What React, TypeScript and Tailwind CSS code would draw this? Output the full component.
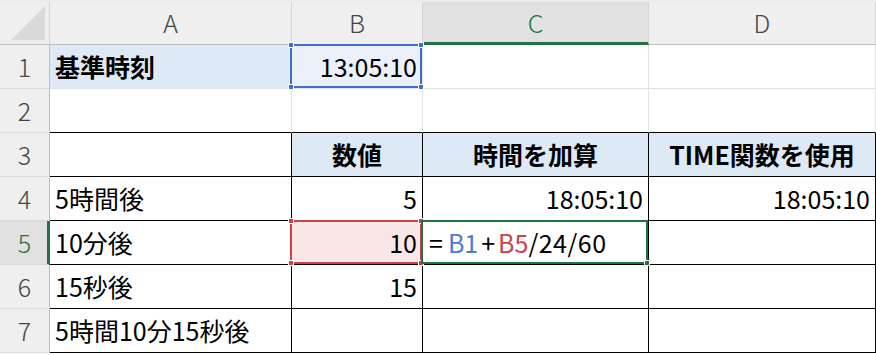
import React from "react"

const font = { fontFamily: '"Noto Sans CJK JP", "Noto Sans", sans-serif' }

const GRID = "#e1e1e1"
const BLACK = "#000000"

type CellDef = {
  text?: React.ReactNode
  align?: "left" | "right" | "center"
  bold?: boolean
  bg?: string
  overlay?: React.ReactNode
}

// selection outline with square handles at the corners
function Outline({ color, corners }: { color: string; corners: ("tl" | "tr" | "bl" | "br")[] }) {
  const pos: Record<string, string> = {
    tl: "-left-[4px] -top-[4px]",
    tr: "-right-[4px] -top-[4px]",
    bl: "-left-[4px] -bottom-[4px]",
    br: "-right-[4px] -bottom-[4px]",
  }
  return (
    <div
      className="pointer-events-none absolute -left-[2px] -top-[1px] right-0 bottom-0 z-10 border-2"
      style={{ borderColor: color }}
    >
      {corners.map((c) => (
        <div
          key={c}
          className={`absolute h-[6px] w-[6px] border border-white ${pos[c]}`}
          style={{ backgroundColor: color }}
        />
      ))}
    </div>
  )
}

const formula = (
  <span>
    <span className="ml-[1px] mr-[5px]">=</span>
    <span className="text-[#4a7bd6]">B1</span>
    <span className="mx-[3px]">+</span>
    <span className="text-[#c9444a]">B5</span>
    <span className="tracking-[0.5px]">/24/60</span>
  </span>
)

const rows: CellDef[][] = [
  [
    { text: "基準時刻", bold: true, bg: "#dde9f5" },
    {
      text: "13:05:10",
      align: "right",
      bg: "#ebf0f9",
      overlay: <Outline color="#3f6fcb" corners={["tl", "tr", "bl", "br"]} />,
    },
    {},
    {},
  ],
  [{}, {}, {}, {}],
  [
    {},
    { text: "数値", align: "center", bold: true, bg: "#dde9f5" },
    { text: "時間を加算", align: "center", bold: true, bg: "#dde9f5" },
    { text: "TIME関数を使用", align: "center", bold: true, bg: "#dde9f5" },
  ],
  [
    { text: "5時間後" },
    { text: "5", align: "right" },
    { text: "18:05:10", align: "right" },
    { text: "18:05:10", align: "right" },
  ],
  [
    { text: "10分後" },
    {
      text: "10",
      align: "right",
      bg: "#f9e7e8",
      overlay: <Outline color="#c9444a" corners={["tl", "tr", "bl", "br"]} />,
    },
    {
      text: formula,
      overlay: <Outline color="#217346" corners={["br"]} />,
    },
    {},
  ],
  [{ text: "15秒後" }, { text: "15", align: "right" }, {}, {}],
  [{ text: "5時間10分15秒後" }, {}, {}, {}],
]

const cols = ["A", "B", "C", "D"]
const widths = ["w-[242px]", "w-[131px]", "w-[226px]", "w-[227px]"]

export default function App() {
  return (
    <div className="h-[355px] w-[876px] overflow-hidden bg-white text-black" style={font}>
      <div className="h-[2px] bg-[#e9efe2]" />

      {/* column headers */}
      <div className="flex h-[43px] bg-[#efefef]">
        <div className="flex w-[50px] shrink-0 items-end justify-end border-b border-r border-b-[#bdbdbd] border-r-[#d4d4d4] pb-[3px] pr-[3px]">
          <svg width="36" height="36" viewBox="0 0 36 36">
            <polygon points="35,1 35,35 1,35" fill="#dadada" />
          </svg>
        </div>
        {cols.map((c, i) => (
          <div
            key={c}
            className={`${widths[i]} flex shrink-0 items-center justify-center border-r border-r-[#d4d4d4] text-[25px] font-light ${
              c === "C"
                ? "border-b-[3px] border-b-[#217346] bg-[#e1e1e1] pt-[2px] text-[#217346]"
                : "border-b border-b-[#bdbdbd] text-[#444]"
            }`}
          >
            {c}
          </div>
        ))}
      </div>

      {rows.map((row, r) => {
        const selectedRow = r === 4
        return (
          <div key={r} className="flex h-[44px]">
            <div
              className={`flex w-[50px] shrink-0 items-center justify-center border-b border-b-[#dadada] text-[25px] font-light ${
                selectedRow
                  ? "border-r-[3px] border-r-[#217346] bg-[#e1e1e1] pl-[2px] text-[#217346]"
                  : "border-r border-r-[#bdbdbd] bg-[#efefef] text-[#444]"
              }`}
            >
              {r + 1}
            </div>
            {row.map((cell, c) => {
              const inTable = r >= 2
              const right = inTable ? BLACK : GRID
              const bottom = r >= 1 ? BLACK : GRID
              const justify =
                cell.align === "right" ? "justify-end" : cell.align === "center" ? "justify-center" : "justify-start"
              return (
                <div
                  key={c}
                  className={`${widths[c]} relative flex shrink-0 items-center whitespace-nowrap border-b border-r px-[5px] text-[25px] ${justify} ${
                    cell.bold ? "font-bold" : ""
                  }`}
                  style={{ backgroundColor: cell.bg, borderRightColor: right, borderBottomColor: bottom }}
                >
                  {cell.text}
                  {cell.overlay}
                </div>
              )
            })}
          </div>
        )
      })}
    </div>
  )
}
